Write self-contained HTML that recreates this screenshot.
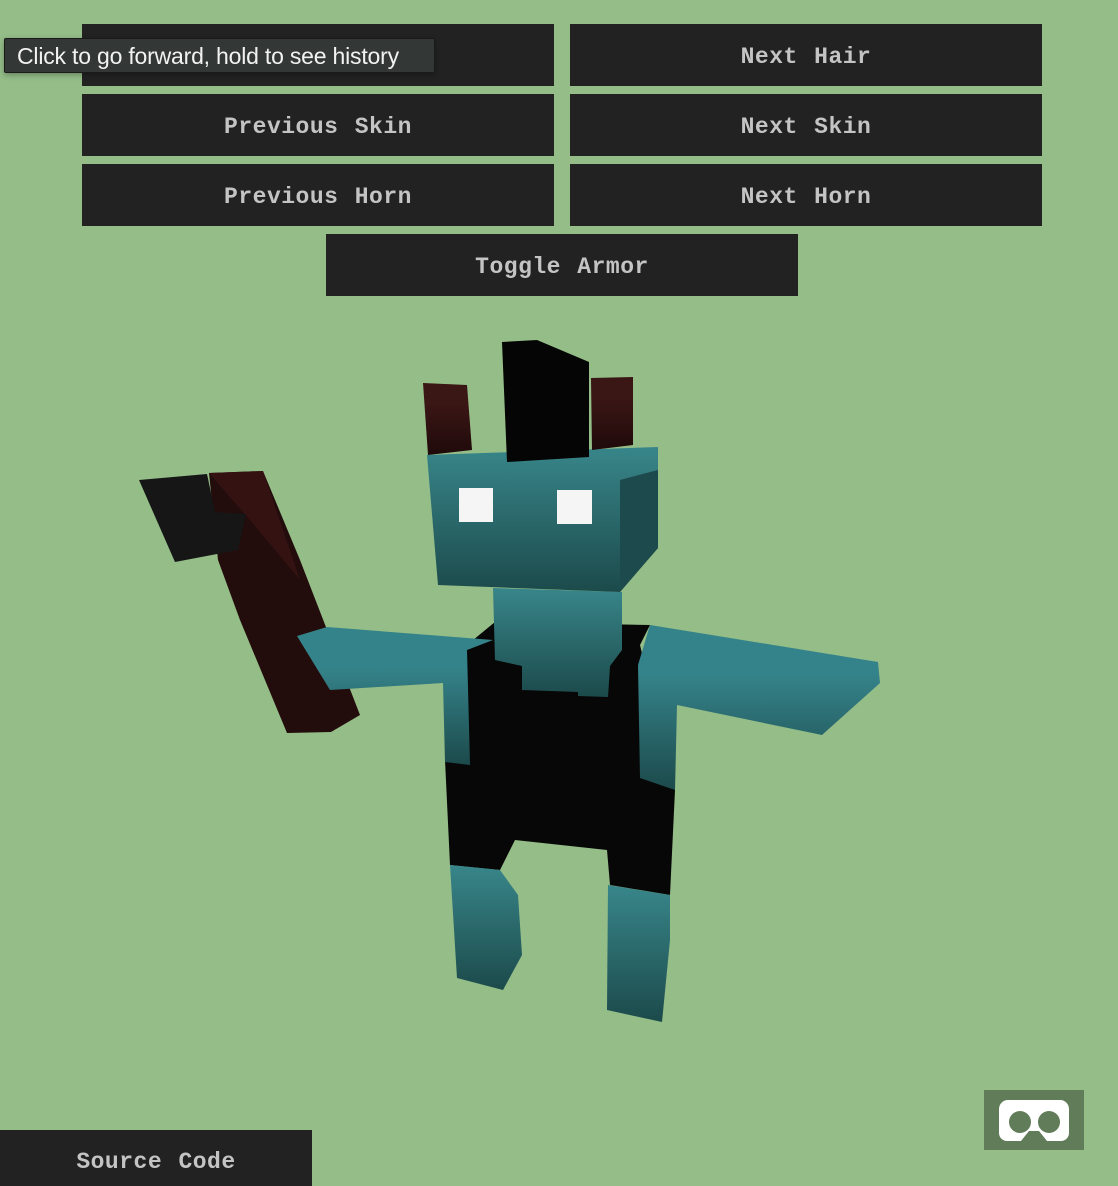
<!DOCTYPE html>
<html><head><meta charset="utf-8"><style>
html,body{margin:0;padding:0;width:1118px;height:1186px;overflow:hidden;background:#94bd88;position:relative;font-family:"Liberation Mono","Courier New",monospace}
.b{position:absolute;background:#222;color:#c4c4c4;font-size:23px;font-weight:bold;letter-spacing:0.5px;display:flex;align-items:center;justify-content:center;height:62px;width:472px;word-spacing:2px;padding-top:4px;box-sizing:border-box}
.tip{position:absolute;left:4px;top:38px;width:431px;height:35px;background:#333837;border:1px solid #1a1a1a;border-radius:2px;color:#f2f2f2;font-family:"Liberation Sans",sans-serif;font-size:23px;line-height:35px;padding-left:12px;box-sizing:border-box;box-shadow:0 2px 6px rgba(0,0,0,.3);white-space:nowrap;letter-spacing:-0.2px}
</style></head><body>
<div class="b" style="left:82px;top:24px"></div>
<div class="b" style="left:570px;top:24px">Next Hair</div>
<div class="b" style="left:82px;top:94px">Previous Skin</div>
<div class="b" style="left:570px;top:94px">Next Skin</div>
<div class="b" style="left:82px;top:164px">Previous Horn</div>
<div class="b" style="left:570px;top:164px">Next Horn</div>
<div class="b" style="left:326px;top:234px">Toggle Armor</div>
<div class="b" style="left:0;top:1130px;width:312px;height:56px;padding-top:8px">Source Code</div>
<div class="tip">Click to go forward, hold to see history</div>
<svg style="position:absolute;left:0;top:0" width="1118" height="1186">
<defs>
<linearGradient id="t" x1="0" y1="0" x2="0" y2="1"><stop offset="0" stop-color="#38868a"/><stop offset="1" stop-color="#1c4a4b"/></linearGradient>
<linearGradient id="t2" x1="0" y1="0" x2="0" y2="1"><stop offset="0.3" stop-color="#35838a"/><stop offset="1" stop-color="#1c4a4b"/></linearGradient>
<linearGradient id="h" x1="0" y1="0" x2="0" y2="1"><stop offset="0.3" stop-color="#3a1615"/><stop offset="1" stop-color="#1f0a0a"/></linearGradient>
</defs>
<polygon points="209,473 263,471 300,560 360,715 331,732 287,733 240,620 218,560" fill="#230c0c"/>
<polygon points="209,473 263,471 300,580 250,520" fill="#341212"/>
<polygon points="139,480 207,474 215,512 246,514 238,550 175,562" fill="#161616"/>
<polygon points="467,645 495,622 650,625 640,645 675,790 670,895 610,885 607,850 515,840 500,870 450,865 445,760 467,760" fill="#070707"/>
<polygon points="297,636 327,627 493,640 467,650 470,765 445,762 443,683 330,690" fill="url(#t2)"/>
<polygon points="650,625 878,662 880,683 822,735 677,705 675,790 640,778 638,665" fill="url(#t2)"/>
<polygon points="493,588 622,592 622,650 610,666 608,697 578,696 578,692 522,690 522,666 495,660" fill="url(#t)"/>
<polygon points="450,865 500,870 518,895 522,955 503,990 457,978" fill="url(#t)"/>
<polygon points="608,885 670,895 670,940 662,1022 607,1010" fill="url(#t)"/>
<polygon points="427,455 658,447 658,548 620,592 438,585" fill="url(#t)"/>
<polygon points="620,480 658,470 658,548 620,592" fill="#1d4a4c"/>
<rect x="459" y="488" width="34" height="34" fill="#f5f5f5"/>
<rect x="557" y="490" width="35" height="34" fill="#f5f5f5"/>
<polygon points="423,383 467,385 472,450 428,455" fill="url(#h)"/>
<polygon points="591,378 633,377 633,445 592,450" fill="url(#h)"/>
<polygon points="502,342 537,340 589,362 589,457 507,462" fill="#050505"/>
<rect x="984" y="1090" width="100" height="60" fill="#617c58"/>
<path d="M1008 1100 h52 a9 9 0 0 1 9 9 v24 a8 8 0 0 1 -8 8 h-14 l-8 -10 h-10 l-8 10 h-14 a8 8 0 0 1 -8 -8 v-24 a9 9 0 0 1 9 -9z" fill="#fff"/>
<circle cx="1020" cy="1122" r="11" fill="#617c58"/>
<circle cx="1049" cy="1122" r="11" fill="#617c58"/>
</svg>
</body></html>
